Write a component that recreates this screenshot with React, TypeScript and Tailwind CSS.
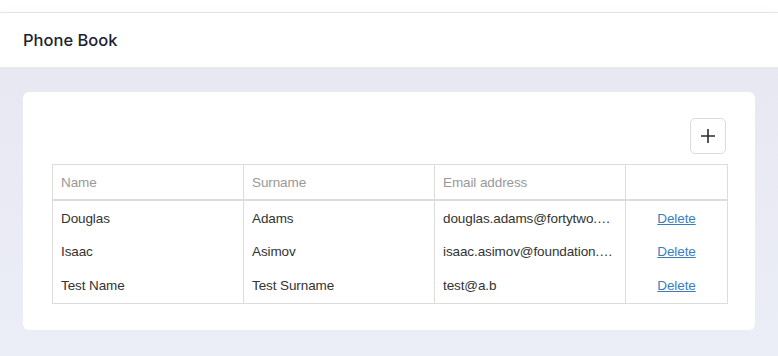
import React from 'react'

type Contact = { name: string; surname: string; email: string }

const contacts: Contact[] = [
  { name: 'Douglas', surname: 'Adams', email: 'douglas.adams@fortytwo.com' },
  { name: 'Isaac', surname: 'Asimov', email: 'isaac.asimov@foundation.com' },
  { name: 'Test Name', surname: 'Test Surname', email: 'test@a.b' },
]

export default function App() {
  return (
    <div className="w-[778px] h-[356px] overflow-hidden bg-[#eceef6] flex flex-col" style={{ fontFamily: '"Liberation Sans", Arial, sans-serif' }}>
      <div className="h-[13px] bg-white border-b border-[#e8e8ec] shrink-0" />
      <header className="h-[54px] bg-white flex items-center px-[23px] shrink-0 shadow-[0_2px_10px_rgba(40,45,90,0.06)]">
        <h1 className="text-[16.5px] font-medium text-[#1d2233] mt-[1px]" style={{ fontFamily: 'Inter, "Noto Sans", sans-serif' }}>
          Phone Book
        </h1>
      </header>
      <main className="flex-1 bg-gradient-to-b from-[#e7e8f2] to-[#eceef7] pt-[25px] px-[23px]">
        <div className="bg-white rounded-[6px] h-[238px] pt-[26px] px-[29px]">
          <div className="flex justify-end mb-[10px]">
            <button className="w-[36px] h-[36px] border border-[#dcdcdc] rounded-[5px] flex items-center justify-center">
              <svg width="16" height="16" viewBox="0 0 16 16" fill="none" stroke="#2b2b2b" strokeWidth="1.6">
                <path d="M8 1v14M1 8h14" />
              </svg>
            </button>
          </div>
          <table className="w-[675px] table-fixed border-collapse text-[13.5px] tracking-[-0.1px]">
            <colgroup>
              <col className="w-[191px]" />
              <col className="w-[191px]" />
              <col className="w-[191px]" />
              <col className="w-[102px]" />
            </colgroup>
            <thead>
              <tr className="h-[35px]">
                <th className="border border-[#dddddd] border-b-2 text-left font-normal text-[#999999] px-[8px] pt-[2px]">Name</th>
                <th className="border border-[#dddddd] border-b-2 text-left font-normal text-[#999999] px-[8px] pt-[2px]">Surname</th>
                <th className="border border-[#dddddd] border-b-2 text-left font-normal text-[#999999] px-[8px] pt-[2px]">Email address</th>
                <th className="border border-[#dddddd] border-b-2" />
              </tr>
            </thead>
            <tbody>
              {contacts.map((c, i) => (
                <tr key={c.email} className={i === 0 ? 'h-[36px] text-[#333333]' : 'h-[34px] text-[#333333]'}>
                  <td className={i === 0 ? 'border-x border-[#dddddd] px-[8px] pt-[2px]' : 'border-x border-[#dddddd] px-[8px]'}>{c.name}</td>
                  <td className={i === 0 ? 'border-x border-[#dddddd] px-[8px] pt-[2px]' : 'border-x border-[#dddddd] px-[8px]'}>{c.surname}</td>
                  <td className={i === 0 ? 'border-x border-[#dddddd] pl-[8px] pr-[12px] pt-[2px] truncate' : 'border-x border-[#dddddd] pl-[8px] pr-[12px] truncate'}>{c.email}</td>
                  <td className={i === 0 ? 'border-x border-[#dddddd] text-center pt-[2px]' : 'border-x border-[#dddddd] text-center'}>
                    <a href="#" className="text-[#3a7dbf] underline">Delete</a>
                  </td>
                </tr>
              ))}
              <tr>
                <td colSpan={4} className="border-t border-[#dddddd] p-0 h-0" />
              </tr>
            </tbody>
          </table>
        </div>
      </main>
    </div>
  )
}
